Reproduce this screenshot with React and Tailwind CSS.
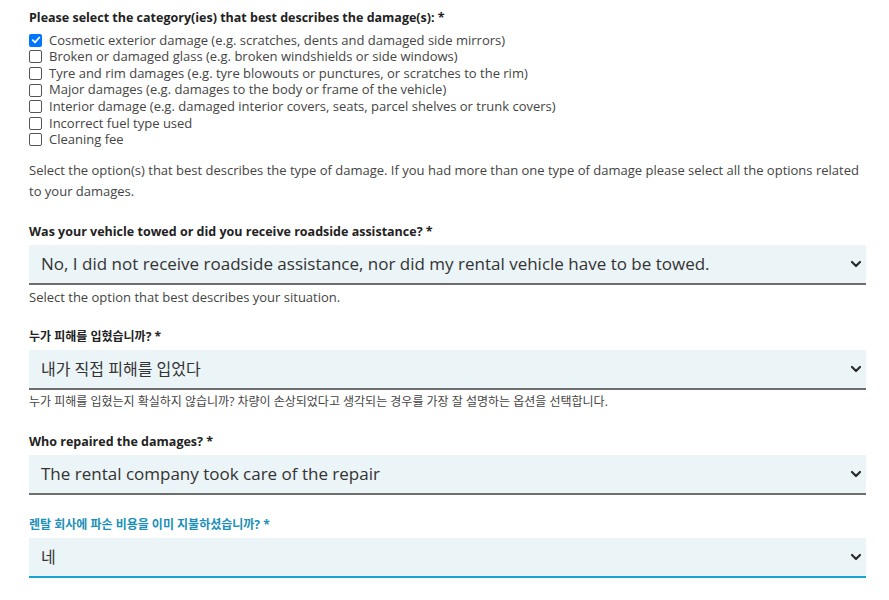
import React from "react";

const font = { fontFamily: '"Open Sans", "Noto Sans CJK KR", sans-serif' };

const categories = [
  { label: "Cosmetic exterior damage (e.g. scratches, dents and damaged side mirrors)", checked: true },
  { label: "Broken or damaged glass (e.g. broken windshields or side windows)" },
  { label: "Tyre and rim damages (e.g. tyre blowouts or punctures, or scratches to the rim)" },
  { label: "Major damages (e.g. damages to the body or frame of the vehicle)" },
  { label: "Interior damage (e.g. damaged interior covers, seats, parcel shelves or trunk covers)" },
  { label: "Incorrect fuel type used" },
  { label: "Cleaning fee" },
];

const Chevron = () => (
  <svg width="12" height="8" viewBox="0 0 12 8" className="shrink-0">
    <path d="M2 2 L6 6 L10 2" fill="none" stroke="#2b2b2b" strokeWidth="2.2" strokeLinecap="round" strokeLinejoin="round" />
  </svg>
);

const Select = ({ value, active, korean }) => (
  <div
    className={`h-[40px] bg-[#ebf4f7] flex items-center justify-between pl-3 pr-[4px] border-b-2 ${
      active ? "border-[#1ba3cf]" : "border-[#6e6e6e]"
    }`}
  >
    <span className={`text-[#333] ${korean ? "text-[16px]" : "text-[17px]"}`}>{value}</span>
    <Chevron />
  </div>
);

const Field = ({ label, value, help, active, korean, className }) => (
  <div className={className}>
    <div
      className={`font-bold leading-[16px] mb-[5px] ${korean ? "text-[12px]" : "text-[12.5px]"} ${
        active ? "text-[#1b8fb8]" : "text-[#222]"
      }`}
    >
      {label} *
    </div>
    <Select value={value} active={active} korean={korean} />
    {help && (
      <div className={`leading-[16px] text-[#444] mt-[4px] ${korean ? "text-[12px]" : "text-[13px]"}`}>{help}</div>
    )}
  </div>
);

export default function App() {
  return (
    <div className="bg-white w-[889px] h-[600px] overflow-hidden pl-[29px] pr-[23px] pt-[10px]" style={font}>
      <div className="text-[12.5px] font-bold leading-[16px] text-[#222]">
        Please select the category(ies) that best describes the damage(s): *
      </div>
      <div className="mt-[6px] flex flex-col">
        {categories.map((c) => (
          <div key={c.label} className="h-[16.6px] flex items-center gap-[7px]">
            {c.checked ? (
              <span className="w-[13px] h-[13px] rounded-[2px] bg-[#0075ff] flex items-center justify-center">
                <svg width="10" height="10" viewBox="0 0 10 10">
                  <path d="M1.8 5.2 L4 7.3 L8.3 2.5" fill="none" stroke="white" strokeWidth="1.8" strokeLinecap="round" strokeLinejoin="round" />
                </svg>
              </span>
            ) : (
              <span className="w-[13px] h-[13px] rounded-[2px] border border-[#555] bg-white" />
            )}
            <span className="text-[13px] text-[#444]">{c.label}</span>
          </div>
        ))}
      </div>
      <p className="mt-[12px] text-[13px] leading-[21px] text-[#444]">
        Select the option(s) that best describes the type of damage. If you had more than one type of damage please select all the options related to your damages.
      </p>
      <Field
        className="mt-[22px]"
        label="Was your vehicle towed or did you receive roadside assistance?"
        value="No, I did not receive roadside assistance, nor did my rental vehicle have to be towed."
        help="Select the option that best describes your situation."
      />
      <Field
        className="mt-[24px]"
        korean
        label="누가 피해를 입혔습니까?"
        value="내가 직접 피해를 입었다"
        help="누가 피해를 입혔는지 확실하지 않습니까? 차량이 손상되었다고 생각되는 경우를 가장 잘 설명하는 옵션을 선택합니다."
      />
      <Field className="mt-[24px]" label="Who repaired the damages?" value="The rental company took care of the repair" />
      <Field className="mt-[22px]" korean active label="렌탈 회사에 파손 비용을 이미 지불하셨습니까?" value="네" />
    </div>
  );
}
